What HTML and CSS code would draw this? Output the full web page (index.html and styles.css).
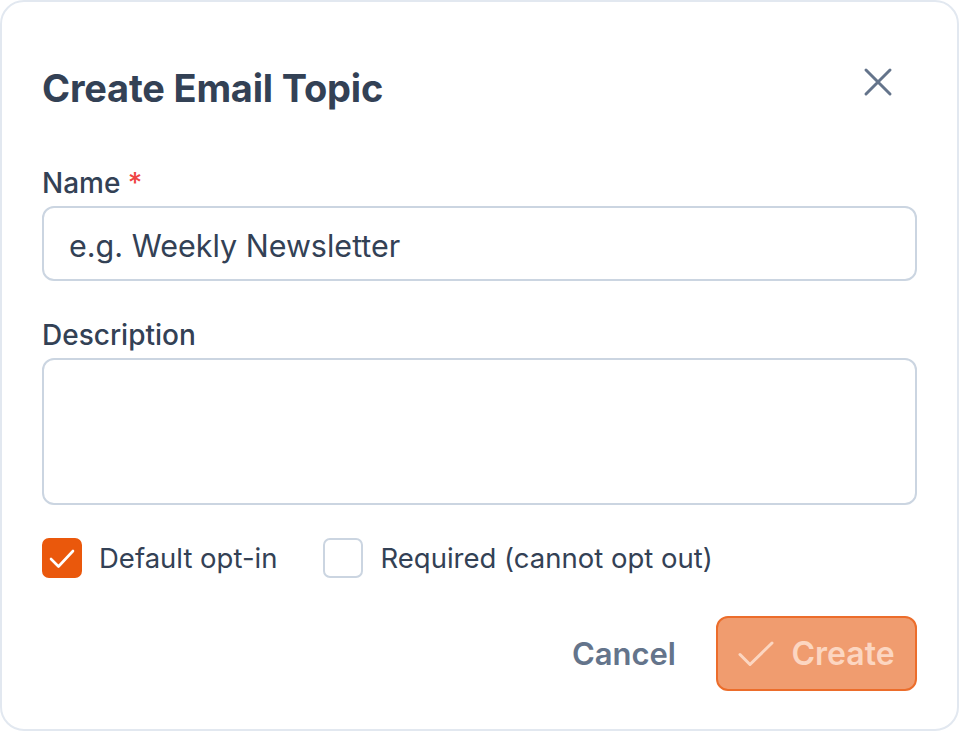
FILE: index.html
```html
<!DOCTYPE html>
<html>
<head>
<meta charset="utf-8">
<link rel="stylesheet" href="styles.css">
</head>
<body>
<div class="card">
  <div class="header">
    <h1 class="title">Create Email Topic</h1>
    <button class="close" aria-label="Close">
      <svg width="48" height="48" viewBox="0 0 24 24" fill="none" stroke="#64748b" stroke-width="1.5" stroke-linecap="round"><path d="M18 6L6 18M6 6l12 12"/></svg>
    </button>
  </div>
  <div class="field">
    <label class="label">Name <span class="req">*</span></label>
    <div class="input">e.g. Weekly Newsletter</div>
  </div>
  <div class="field field-desc">
    <label class="label">Description</label>
    <div class="textarea"></div>
  </div>
  <div class="checks">
    <div class="check">
      <span class="box box-on">
        <svg width="40" height="40" viewBox="0 0 40 40" fill="none" stroke="#fff" stroke-width="2.6" stroke-linecap="round" stroke-linejoin="round"><path d="M9 21l7.5 7.5L31 13"/></svg>
      </span>
      <span class="check-text">Default opt-in</span>
    </div>
    <div class="check">
      <span class="box"></span>
      <span class="check-text">Required (cannot opt out)</span>
    </div>
  </div>
  <div class="actions">
    <button class="btn-cancel">Cancel</button>
    <button class="btn-create">
      <svg width="36" height="26" viewBox="0 0 36 26" fill="none" stroke="#fcd6c1" stroke-width="3" stroke-linecap="round" stroke-linejoin="round"><path d="M2 13.5l10 10L34 2"/></svg>
      <span>Create</span>
    </button>
  </div>
</div>
</body>
</html>
```
FILE: styles.css
```css
* { box-sizing: border-box; }
html, body { margin: 0; padding: 0; background: #ffffff; }
body { font-family: Inter, "Noto Sans", sans-serif; color: #334155; }
.card {
  width: 959px;
  height: 731px;
  border: 2px solid #e2e8f0;
  border-radius: 24px;
  background: #fff;
  padding: 62px 40px 40px 40px;
  display: flex;
  flex-direction: column;
}
.header {
  display: flex;
  align-items: center;
  justify-content: space-between;
  height: 48px;
}
.title {
  margin: 0;
  font-size: 38px;
  line-height: 48px;
  font-weight: 700;
  color: #334155;
  letter-spacing: -0.2px;
}
.close {
  border: 0;
  background: transparent;
  padding: 0;
  margin-right: 15px;
  margin-top: -12px;
  width: 48px;
  height: 48px;
  display: flex;
}
.field { display: flex; flex-direction: column; margin-top: 51px; }
.field-desc { margin-top: 34px; }
.label {
  font-size: 28px;
  line-height: 40px;
  font-weight: 500;
  color: #334155;
  margin-bottom: 3px;
}
.input {
  height: 75px;
  flex: none;
  border: 2px solid #cbd5e1;
  border-radius: 12px;
  padding: 4px 25px 0;
  display: flex;
  align-items: center;
  font-size: 30.5px;
  color: #334155;
}
.req { color: #ef4444; }
.textarea {
  height: 147px;
  flex: none;
  border: 2px solid #cbd5e1;
  border-radius: 12px;
}
.checks {
  display: flex;
  gap: 46px;
  margin-top: 33px;
}
.check { display: flex; align-items: center; gap: 17px; }
.box {
  width: 40px;
  height: 40px;
  flex: none;
  border: 2px solid #cbd5e1;
  border-radius: 7px;
  display: flex;
  align-items: center;
  justify-content: center;
}
.box-on { background: #ea580c; border-color: #ea580c; }
.box-on svg { flex: none; }
.check-text { font-size: 27.5px; line-height: 40px; color: #334155; }
.actions {
  display: flex;
  justify-content: flex-end;
  align-items: center;
  gap: 20px;
  margin-top: 38px;
}
.btn-cancel {
  border: 0;
  background: transparent;
  font-family: inherit;
  font-size: 31px;
  font-weight: 600;
  color: #64748b;
  padding: 0 20px;
  height: 74px;
}
.btn-create {
  height: 75px;
  width: 201px;
  flex: none;
  border: 2px solid #ec6d2b;
  border-radius: 12px;
  background: #f09c6f;
  color: #fcd6c1;
  font-family: inherit;
  font-size: 32px;
  font-weight: 600;
  display: flex;
  align-items: center;
  justify-content: center;
  gap: 17px;
  padding: 0;
}
```
